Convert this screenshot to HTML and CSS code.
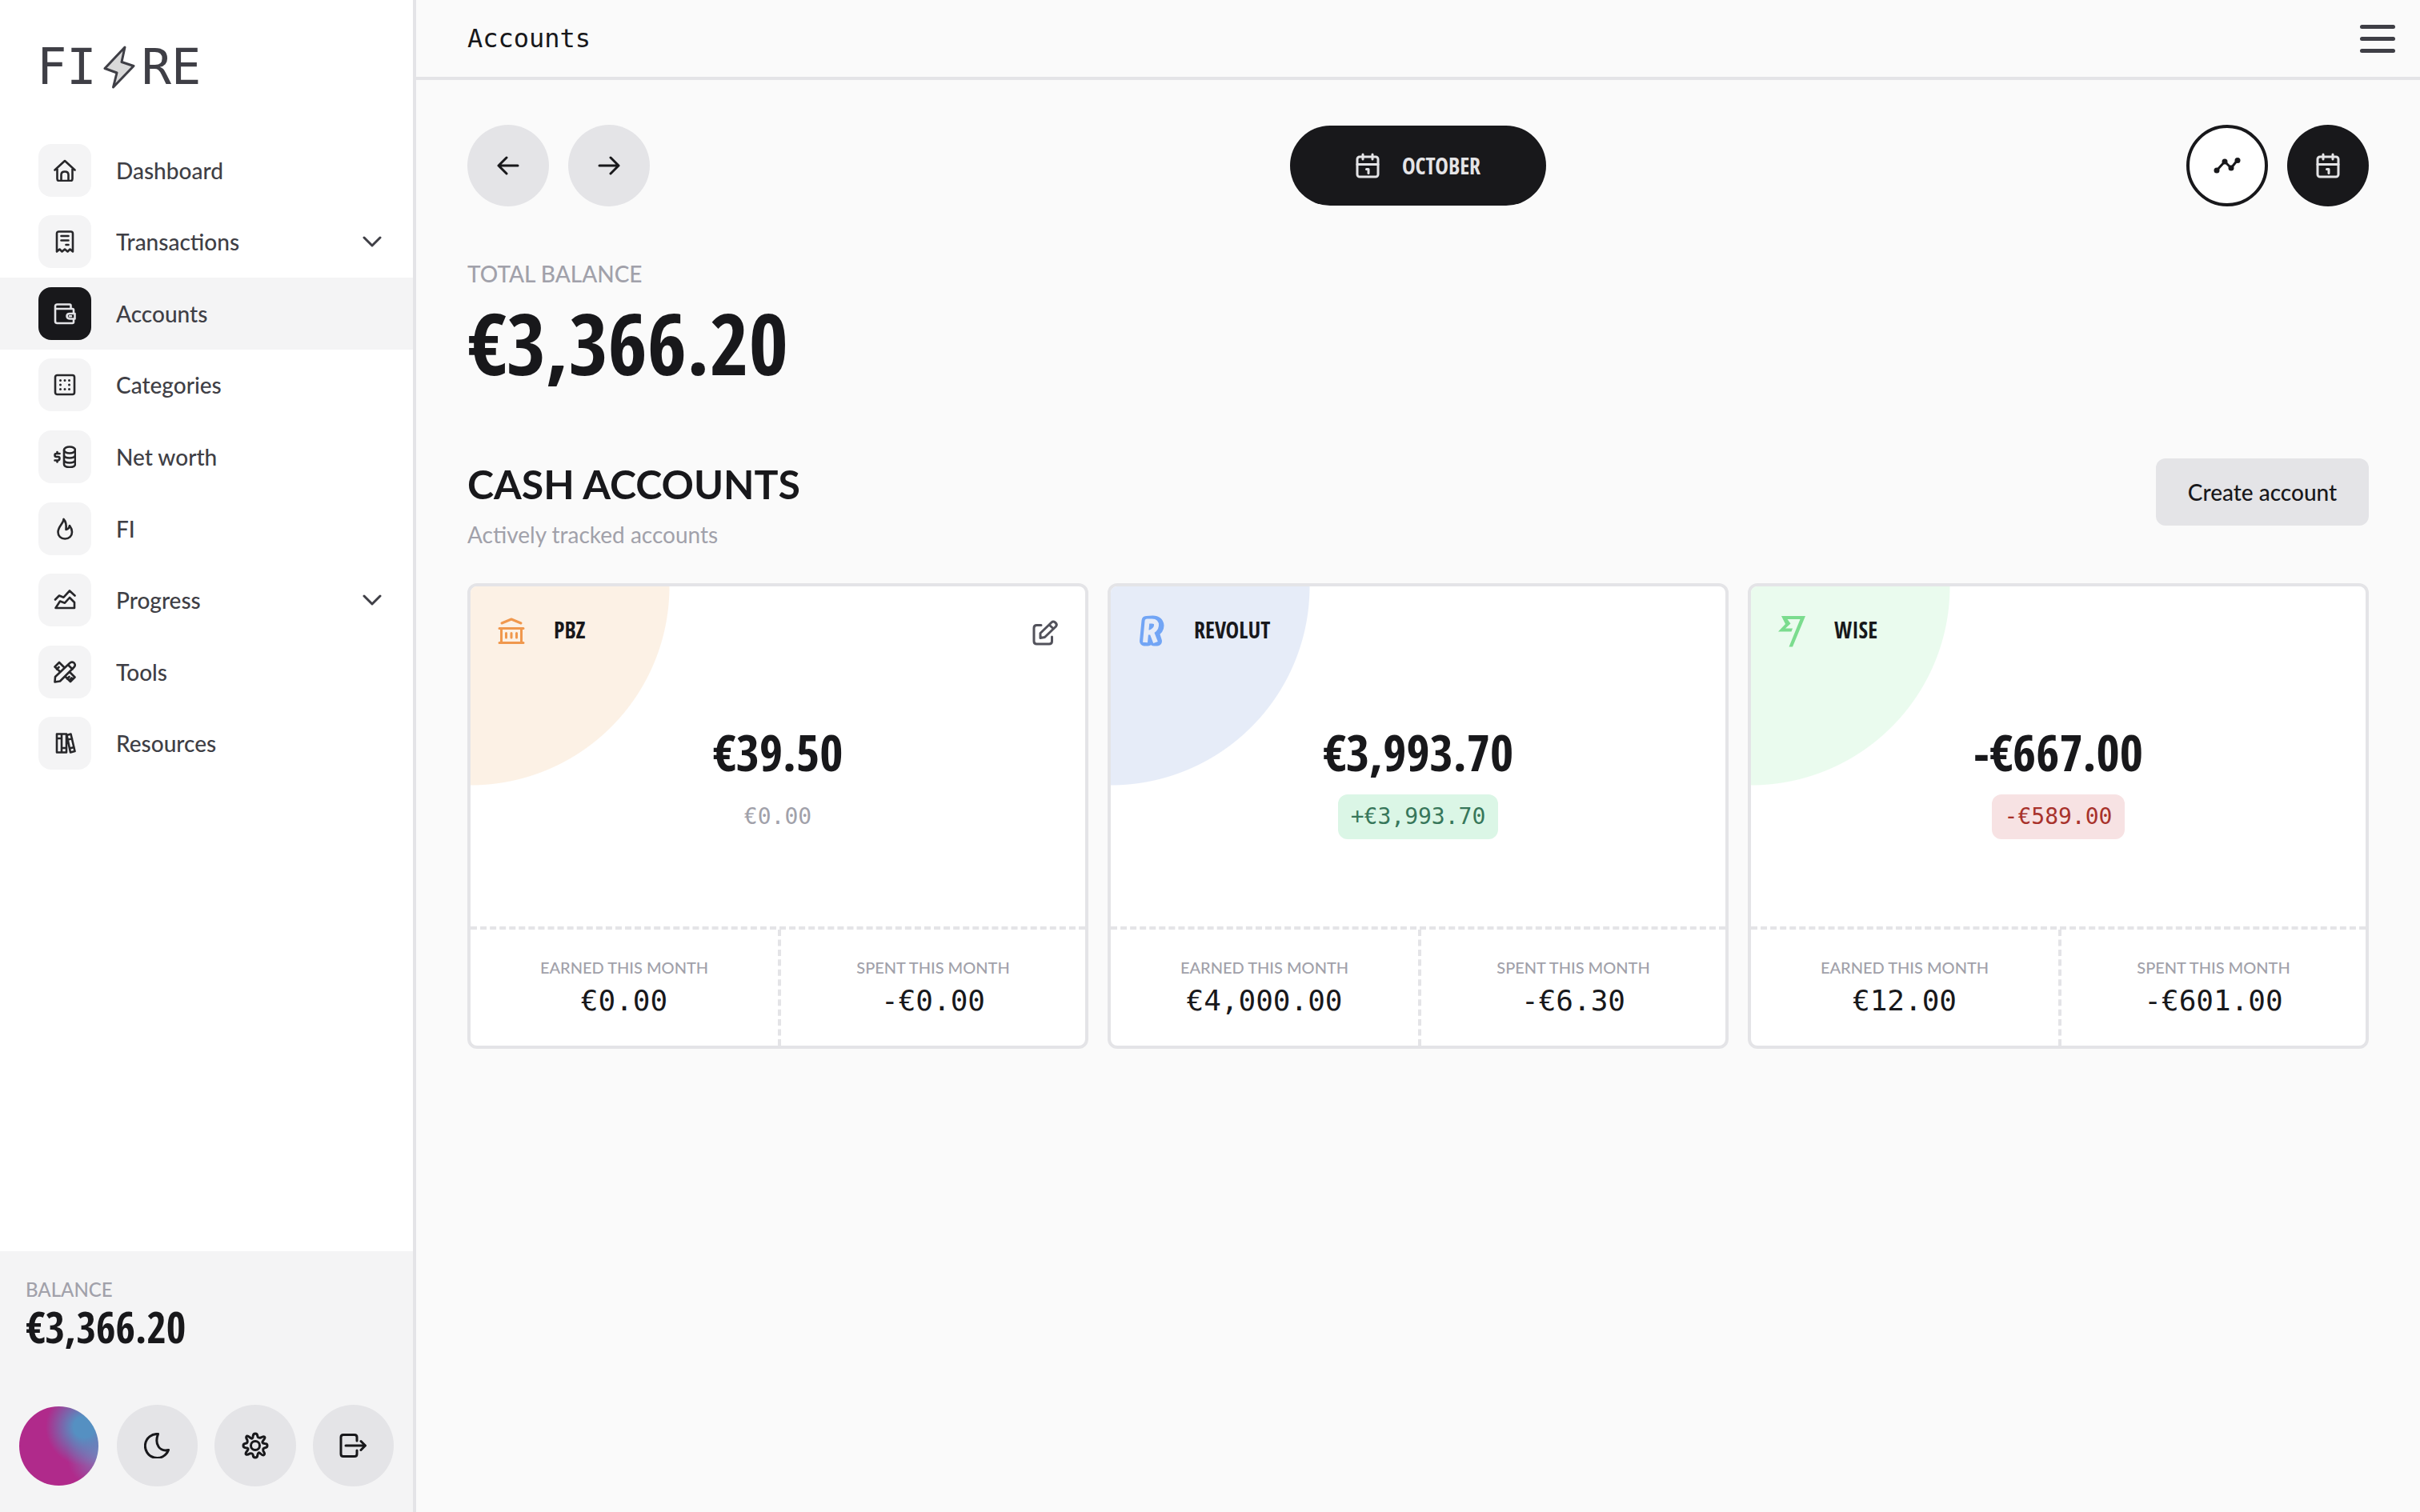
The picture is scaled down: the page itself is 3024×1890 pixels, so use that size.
FILE: index.html
```html
<!DOCTYPE html>
<html lang="en">
<head>
<meta charset="utf-8">
<meta name="viewport" content="width=device-width, initial-scale=1">
<title>Accounts</title>
<link rel="stylesheet" href="styles.css">
</head>
<body>
<svg class="sprite" aria-hidden="true">
  <symbol id="calendar" viewBox="0 0 30 32">
    <rect x="2" y="5" width="26" height="25" rx="3"/><path d="M2 14.500H28M9 2V8M21 2V8M13.500 20.500h2.500v5"/>
  </symbol>
  <symbol id="chevron" viewBox="0 0 24 16"><path d="M2 3L12 13L22 3"/></symbol>
</svg>
<div class="app">
  <aside class="sidebar">
    <a class="logo" href="#">FI<svg width="40" height="54" viewBox="0 0 40 54" aria-hidden="true"><path d="M27 2L23 20.500L38 25.500L12.500 52L17 34L2 28.500Z"/></svg>RE</a>
    <nav class="nav">
      <a class="nav-item" href="#"><span class="tile"><svg class="icon" viewBox="0 0 28 28"><path d="M1.500 13.500L14 2L26.500 13.500M4.500 12V24.500Q4.500 27 7 27H21Q23.500 27 23.500 24.500V12M9.500 27V19.500Q9.500 15.500 14 15.500T18.500 19.500V27"/></svg></span>Dashboard</a>
      <button class="nav-item" type="button"><span class="tile"><svg class="icon" viewBox="0 0 28 28"><path d="M4 26.500V4Q4 1.500 6.500 1.500H21.500Q24 1.500 24 4V26.500L20.500 23.500L17.500 26.500L14 23.500L10.500 26.500L7.500 23.500ZM9.500 7H18.500M9.500 12.500H18.500M15.500 18H18.500"/></svg></span>Transactions<svg class="chevron"><use href="#chevron"/></svg></button>
      <a class="nav-item active" href="#" aria-current="page"><span class="tile"><svg class="icon" viewBox="0 0 28 28"><path d="M25 13.500V9.500Q25 8 23.500 8H2.500M21.500 8V4Q21.500 2.500 20 2.500H4.500Q2 2.500 2 5V23.500Q2 26 4.500 26H23.500Q25 26 25 24.500V20.500M26.500 14H20Q16.500 14 16.500 17T20 20.500H26.500ZM20 17.200H22"/></svg></span>Accounts</a>
      <a class="nav-item" href="#"><span class="tile"><svg class="icon" viewBox="0 0 28 28"><rect x="2" y="2" width="24" height="24" rx="2.500"/><path class="dots" d="M8.500 8.500h0M14 8.500h0M19.500 8.500h0M8.500 14h0M19.500 14h0M8.500 19.500h0M14 19.500h0M19.500 19.500h0"/></svg></span>Categories</a>
      <a class="nav-item" href="#"><span class="tile"><svg class="icon" viewBox="0 0 28 28"><ellipse cx="20" cy="5.500" rx="7" ry="4"/><path d="M13 5.500V23C13 25.500 16 27 20 27S27 25.500 27 23V5.500M13 11.500C13 14 16 15.500 20 15.500S27 14 27 11.500M13 17.500C13 20 16 21.500 20 21.500S27 20 27 17.500M7.500 10H3.500Q1.500 10 1.500 12T3.500 14H5.500Q7.500 14 7.500 16T5.500 18.500H1.500M4.500 8V10M4.500 18.500V20.500"/></svg></span>Net worth</a>
      <a class="nav-item" href="#"><span class="tile"><svg class="icon" viewBox="0 0 28 28"><path d="M12.500 2C12.500 7 5.500 11 5.500 18C5.500 23 9 26.500 14.200 26.500S23 23 23 18C23 14.500 21.500 12 20 10C19.500 13 18 14.500 15.500 15C16 10 15.500 5 12.500 2Z"/></svg></span>FI</a>
      <button class="nav-item" type="button"><span class="tile"><svg class="icon" viewBox="0 0 28 28"><path d="M2 13.500L7 8.500L12.500 10.700L20 2.500L26.500 8.500M2.500 24L8 15.500L14 17.700L20 11L26 17V24Z"/></svg></span>Progress<svg class="chevron"><use href="#chevron"/></svg></button>
      <a class="nav-item" href="#"><span class="tile"><svg class="icon" viewBox="0 0 28 28"><path d="M1.500 26.500L2 20L20 3Q22.500 0.500 25.500 2.500Q28 5.500 25.500 8L8 25.500ZM18 5L23.500 10.500M8.500 14L1.500 7.500L7 2L13.500 8.500M4 10.500L6.500 8M20 14L26.500 20.500L21 26L14.500 19.500M17 22.500L19.500 20M20.500 23.500L22.500 21.500"/></svg></span>Tools</a>
      <a class="nav-item" href="#"><span class="tile"><svg class="icon" viewBox="0 0 28 28"><path d="M4 2.500H10V25.500H4ZM10 2.500H16V25.500H10ZM4 8H10M10 20H16M16.500 4L21.500 2.500L26.500 24L21 25.500ZM18 9.500L23 8.200M20 20.500L25.500 19"/></svg></span>Resources</a>
    </nav>
    <section class="summary">
      <h2 class="summary-label">BALANCE</h2>
      <p class="summary-amount">€3,366.20</p>
      <div class="tools">
        <button class="avatar" type="button" aria-label="Profile"></button>
        <button class="round" type="button" aria-label="Dark mode"><svg width="32" height="32" viewBox="0 0 32 32"><path d="M17.500 1.500A15 15 0 1 0 30.500 21.500C20 24 12.500 15 17.500 1.500Z"/></svg></button>
        <button class="round" type="button" aria-label="Settings"><svg width="34" height="34" viewBox="0 0 34 34"><circle cx="17" cy="17" r="5.500"/><path d="M17 2Q19.500 2 19.800 5T24 7Q27 5 28.500 6T27 10.500T29 14.500Q32 14.500 32 17T29 19.800T27 24Q29.500 27 28 28.500T23.500 27T19.800 29Q19.500 32 17 32T14.200 29T10 27Q7 29 5.500 28T7 23.500T5 19.800Q2 19.500 2 17T5 14.200T7 10Q5 7 6 5.500T10.500 7T14.200 5Q14.500 2 17 2Z"/></svg></button>
        <button class="round" type="button" aria-label="Log out"><svg width="34" height="32" viewBox="0 0 34 32"><path d="M22 10V5.500Q22 2.500 19 2.500H5Q2 2.500 2 5.500V26.500Q2 29.500 5 29.500H19Q22 29.500 22 26.500V22M8 16H32M27 10.500L32.500 16L27 21.500"/></svg></button>
      </div>
    </section>
  </aside>

  <div class="page">
    <header class="topbar">
      <h1 class="title">Accounts</h1>
      <button class="menu" type="button" aria-label="Menu"><span></span><span></span><span></span></button>
    </header>
    <main class="content">
      <div class="period">
        <div class="group">
          <button class="round" type="button" aria-label="Previous month"><svg width="28" height="24" viewBox="0 0 28 24"><path d="M26 12H2M12 2L2 12L12 22"/></svg></button>
          <button class="round" type="button" aria-label="Next month"><svg width="28" height="24" viewBox="0 0 28 24"><path d="M2 12H26M16 2L26 12L16 22"/></svg></button>
        </div>
        <button class="month" type="button"><svg width="30" height="32"><use href="#calendar"/></svg>OCTOBER</button>
        <div class="group end">
          <button class="round outline" type="button" aria-label="Chart view"><svg width="34" height="20" viewBox="0 0 34 20"><path d="M4 16L14 5L22 13L30 3"/><g class="nodes"><circle cx="4" cy="16" r="3.500"/><circle cx="14" cy="5" r="3.500"/><circle cx="22" cy="13" r="3.500"/><circle cx="30" cy="3.500" r="3.500"/></g></svg></button>
          <button class="round dark" type="button" aria-label="Month view"><svg width="30" height="32"><use href="#calendar"/></svg></button>
        </div>
      </div>

      <section class="total">
        <h2 class="total-label">TOTAL BALANCE</h2>
        <p class="total-amount">€3,366.20</p>
      </section>

      <section class="accounts">
        <div class="accounts-head">
          <div>
            <h2 class="heading">CASH ACCOUNTS</h2>
            <p class="subheading">Actively tracked accounts</p>
          </div>
          <button class="create" type="button">Create account</button>
        </div>
        <div class="cards">
          <article class="card orange">
            <div class="card-main">
              <header class="card-head">
                <svg class="brand" viewBox="0 0 36 40"><path d="M7 10L19 5L31 10M4 16.500H34M6.500 17V34M31.500 17V34M4 34.500H34M12.500 22.500V28M19 22.500V28M25.500 22.500V28"/></svg>
                <h3 class="name">PBZ</h3>
                <button class="edit" type="button" aria-label="Edit account"><svg width="36" height="36" viewBox="0 0 36 36"><path d="M13 10.500H7.500Q4 10.500 4 14V30.500Q4 34 7.500 34H23Q26.500 34 26.500 30.500V25M12 26.500V20.500L26 7Q28 5 30.500 7Q33.500 9.500 31.500 12L17.500 25.500L12 26.500ZM23 10L28.500 15"/></svg></button>
              </header>
              <div class="figures"><p class="amount">€39.50</p><p class="change none">€0.00</p></div>
            </div>
            <dl class="stats">
              <div><dt>EARNED THIS MONTH</dt><dd>€0.00</dd></div>
              <div><dt>SPENT THIS MONTH</dt><dd>-€0.00</dd></div>
            </dl>
          </article>
          <article class="card blue">
            <div class="card-main">
              <header class="card-head">
                <svg class="brand" viewBox="0 0 36 40"><path class="back" d="M12.500 7L10 32.500L14.500 32.500L16.500 24L22 32.500H26L22.500 21.500Q28.500 18 28.500 13Q28 6.500 20.500 6.500Z"/><path class="front" d="M11 34L13.500 7.500H19.500Q25.500 7.500 25 13T17 21.500H14M19 21L24 34"/></svg>
                <h3 class="name">REVOLUT</h3>
              </header>
              <div class="figures"><p class="amount">€3,993.70</p><p class="change up">+€3,993.70</p></div>
            </div>
            <dl class="stats">
              <div><dt>EARNED THIS MONTH</dt><dd>€4,000.00</dd></div>
              <div><dt>SPENT THIS MONTH</dt><dd>-€6.30</dd></div>
            </dl>
          </article>
          <article class="card green">
            <div class="card-main">
              <header class="card-head">
                <svg class="brand wise" viewBox="0 0 36 40"><path d="M6 1H36L20 39.500H15.500L29.500 5H13.500L17.500 10.500L11 16.500H20L18.500 20.500H2L11 11Z"/></svg>
                <h3 class="name">WISE</h3>
              </header>
              <div class="figures"><p class="amount">-€667.00</p><p class="change down">-€589.00</p></div>
            </div>
            <dl class="stats">
              <div><dt>EARNED THIS MONTH</dt><dd>€12.00</dd></div>
              <div><dt>SPENT THIS MONTH</dt><dd>-€601.00</dd></div>
            </dl>
          </article>
        </div>
      </section>
    </main>
  </div>
</div>
</body>
</html>
```
FILE: styles.css
```css
:root {
  --ink: #18181b;
  --text: #3f3f46;
  --muted: #a1a1aa;
  --line: #e4e4e7;
  --soft: #f4f4f5;
  --page: #fafafa;
  --sans: "Lato", "Liberation Sans", sans-serif;
  --mono: "DejaVu Sans Mono", "Liberation Mono", monospace;
  --condensed: "Open Sans Condensed", "Roboto Condensed", "Open Sans", sans-serif;
}

* { box-sizing: border-box; margin: 0; padding: 0; }

body {
  background: var(--page);
  color: var(--ink);
  font: 500 28px/40px var(--sans);
}

button { border: 0; background: none; color: inherit; font: inherit; cursor: pointer; }
a { color: inherit; text-decoration: none; }
svg { flex: none; fill: none; stroke: currentColor; stroke-width: 3; stroke-linecap: round; stroke-linejoin: round; }
.sprite { display: none; }

.app { display: grid; grid-template-columns: 520px 1fr; min-height: 100vh; }

/* Sidebar */
.sidebar { display: flex; flex-direction: column; background: #fff; border-right: 4px solid var(--line); }
.logo { display: flex; align-items: center; height: 168px; padding-left: 46px; color: var(--text); font: 400 62px/72px var(--mono); }
.logo svg { margin: 0 8px; fill: #d9d9d9; }
.nav { display: grid; grid-template-rows: repeat(9, 1fr); height: 806px; }
.nav-item { display: flex; align-items: center; gap: 31px; padding: 0 39px 0 48px; color: var(--text); text-align: left; }
.nav-item.active { background: var(--soft); }
.tile { display: grid; place-items: center; width: 66px; height: 66px; border-radius: 16px; background: var(--soft); color: #27272a; }
.active .tile { background: var(--ink); color: var(--line); }
.icon { width: 28px; height: 28px; stroke-width: 2.6; }
.dots { stroke-width: 3; }
.chevron { width: 24px; height: 16px; margin-left: auto; }

.summary { margin-top: auto; padding: 32px 24px; background: var(--soft); }
.summary-label { padding-left: 8px; color: var(--muted); font: 500 24px/32px var(--sans); }
.summary-amount { margin-top: 3px; padding-left: 8px; font: 700 53px/56px var(--condensed); }
.tools { display: flex; align-items: center; gap: 21px; margin-top: 69px; }
.avatar {
  width: 99px; height: 99px; margin-right: 2px; border-radius: 50%;
  background:
    radial-gradient(circle at 82% 26%, #5590c2 0 12%, #5590c200 44%),
    radial-gradient(circle at 106% 60%, #7a86c0 0, #7a86c000 38%),
    #b02a8b;
}
.round { display: grid; place-items: center; width: 102px; height: 102px; border-radius: 50%; background: var(--line); }
.round.outline { border: 4px solid var(--ink); background: #fff; }
.round.dark { background: var(--ink); color: var(--line); }
.nodes { fill: currentColor; stroke: none; }

/* Top bar */
.page { display: flex; flex-direction: column; min-width: 0; }
.topbar { display: flex; align-items: center; justify-content: space-between; height: 100px; padding: 0 31px 0 64px; border-bottom: 4px solid var(--line); }
.title { font: 400 32px/40px var(--mono); }
.menu { display: grid; gap: 10px; width: 44px; }
.menu span { height: 5px; border-radius: 3px; background: var(--text); }

/* Content */
.content { padding: 56px 64px; }
.period { display: grid; grid-template-columns: 1fr 320px 1fr; align-items: center; }
.group { display: flex; gap: 24px; }
.end { justify-content: flex-end; }
.month { display: flex; align-items: center; justify-content: center; gap: 28px; height: 100px; border-radius: 50px; background: var(--ink); color: var(--line); font: 700 28px/40px var(--condensed); }

.total { margin-top: 64px; }
.total-label { color: var(--muted); font: 500 28px/40px var(--sans); }
.total-amount { margin-top: 14px; font: 700 106px/104px var(--condensed); }

.accounts { margin-top: 93px; }
.accounts-head { display: flex; align-items: flex-start; justify-content: space-between; }
.heading { margin-top: 2px; font: 700 50px/60px var(--sans); }
.subheading { margin-top: 13px; color: var(--muted); font-weight: 400; }
.create { width: 266px; height: 84px; border-radius: 12px; background: var(--line); }

.cards { display: grid; grid-template-columns: repeat(3, 1fr); gap: 24px; margin-top: 41px; }
.card { overflow: hidden; border: 4px solid var(--line); border-radius: 12px; background: #fff; }
.card-main { display: flex; flex-direction: column; height: 425px; background: radial-gradient(circle at 0 0, var(--tint) 248px, transparent 249px); }
.orange { --tint: #fcf1e5; --brand: #f0984d; }
.blue { --tint: #e6ecf8; --brand: #72a5f5; }
.green { --tint: #eafbee; --brand: #7bdc8e; }
.card-head { display: flex; align-items: center; gap: 36px; padding: 36px 32px 0; }
.brand { width: 36px; height: 40px; color: var(--brand); }
.brand.wise { fill: currentColor; stroke: none; }
.back { fill: currentColor; stroke-width: 12; }
.front { stroke: var(--tint); stroke-width: 6; stroke-linecap: butt; }
.name { font: 700 28px/36px var(--condensed); padding-bottom: 4px; }
.edit { display: grid; margin-left: auto; color: #52525b; }
.figures { display: flex; flex: 1; flex-direction: column; align-items: center; justify-content: center; gap: 21px; padding-bottom: 10px; }
.amount { font: 700 63px/64px var(--condensed); }
.change { padding: 8px 16px; border-radius: 12px; font: 400 28px/40px var(--mono); }
.none { color: var(--muted); }
.up { background: #dbf6e6; color: #37775a; }
.down { background: #f7e2e3; color: #a8322b; }

.stats { display: grid; grid-template-columns: 1fr 1fr; border-top: 4px dashed var(--line); text-align: center; }
.stats div { padding: 35px 0 34px; }
.stats div + div { border-left: 4px dashed var(--line); }
.stats dt { color: var(--muted); font: 500 20px/24px var(--sans); }
.stats dd { margin-top: 8px; font: 400 36px/44px var(--mono); }
```
